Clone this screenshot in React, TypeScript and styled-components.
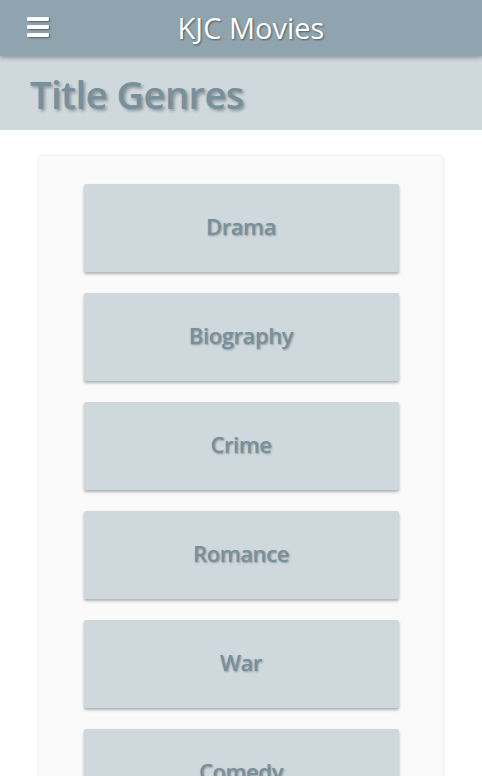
import styled, {createGlobalStyle} from "styled-components";

const GlobalStyle = createGlobalStyle`
  body {
    margin: 0;
    background: #ffffff;
    font-family: "Open Sans", "Noto Sans", sans-serif;
  }
`

const Page = styled.div`
  display: flex;
  flex-direction: column;
  height: 776px;
  overflow: hidden;

  & > * {
    flex-shrink: 0;
  }
`

const TopBar = styled.header`
  position: relative;
  z-index: 2;
  display: flex;
  align-items: center;
  justify-content: center;
  height: 56px;
  background: #8fa4ae;
  box-shadow: 0 2px 4px rgba(0, 0, 0, 0.3);
`

const MenuButton = styled.button`
  position: absolute;
  left: 27px;
  top: 17px;
  display: flex;
  flex-direction: column;
  gap: 4px;
  padding: 0;
  border: none;
  background: none;
  cursor: pointer;

  span {
    display: block;
    width: 22px;
    height: 4px;
    border-radius: 1px;
    background: #ffffff;
    box-shadow: 1px 1px 2px rgba(0, 0, 0, 0.4);
  }
`

const AppTitle = styled.h1`
  margin: 0 0 2px 20px;
  color: #ffffff;
  font-size: 29px;
  font-weight: 400;
  letter-spacing: 0;
  text-shadow: 1px 1px 2px rgba(0, 0, 0, 0.45);
`

const TitleBand = styled.div`
  display: flex;
  align-items: center;
  height: 74px;
  padding-left: 30px;
  background: #cfd8dc;
`

const PageTitle = styled.h2`
  margin: 2px 0 0;
  color: #78909c;
  font-size: 38px;
  font-weight: 600;
  letter-spacing: -0.5px;
  text-shadow: 2px 2px 3px rgba(0, 0, 0, 0.3);
`

const Card = styled.section`
  display: flex;
  flex-direction: column;
  align-items: center;
  gap: 21px;
  width: 404px;
  margin: 26px auto 0;
  padding: 28px 0;
  box-sizing: border-box;
  background: #fafafa;
  border-radius: 3px;
  box-shadow: 0 0 3px rgba(0, 0, 0, 0.15);
`

const GenreButton = styled.button`
  flex-shrink: 0;
  width: 315px;
  height: 88px;
  padding: 0 0 4px;
  border: none;
  border-radius: 2px;
  background: #cfd8dc;
  color: #78909c;
  font-family: "Open Sans", "Noto Sans", sans-serif;
  font-size: 22px;
  font-weight: 600;
  letter-spacing: -0.4px;
  text-shadow: 1px 1px 2px rgba(0, 0, 0, 0.3);
  box-shadow: 0 2px 3px rgba(0, 0, 0, 0.3);
  cursor: pointer;
`

const genres = ["Drama", "Biography", "Crime", "Romance", "War", "Comedy"];

export default function App() {
    return (
        <>
            <GlobalStyle/>
            <Page>
                <TopBar>
                    <MenuButton aria-label="Menu">
                        <span/>
                        <span/>
                        <span/>
                    </MenuButton>
                    <AppTitle>KJC Movies</AppTitle>
                </TopBar>
                <TitleBand>
                    <PageTitle>Title Genres</PageTitle>
                </TitleBand>
                <Card>
                    {genres.map(g => (
                        <GenreButton key={g}>{g}</GenreButton>
                    ))}
                </Card>
            </Page>
        </>
    );
}
